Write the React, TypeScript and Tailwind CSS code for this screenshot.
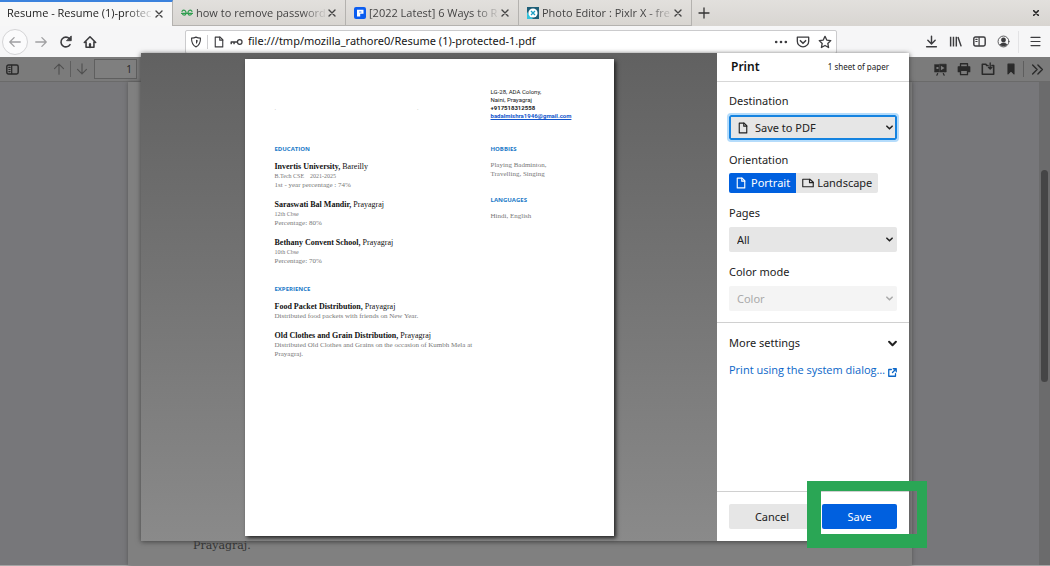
import type { ReactNode } from "react";

type IconProps = { className?: string; children: ReactNode; box?: string };

function Icon({ className = "size-4", children, box = "0 0 16 16" }: IconProps) {
  return (
    <svg
      viewBox={box}
      className={`shrink-0 ${className}`}
      fill="none"
      stroke="currentColor"
      strokeWidth="1.5"
      strokeLinecap="round"
      strokeLinejoin="round"
      aria-hidden="true"
    >
      {children}
    </svg>
  );
}

function PageIcon({ className = "size-3" }: { className?: string }) {
  return (
    <Icon className={className}>
      <path d="M3 1.5h6.5L13 5v9.5H3z" />
      <path d="M9 1.5V5.5h4" />
    </Icon>
  );
}

function Chevron({ className = "size-[7px]" }: { className?: string }) {
  return (
    <Icon className={className} box="0 0 8 8">
      <path d="M1 2.5l3 3 3-3" strokeWidth="1.8" />
    </Icon>
  );
}

function CloseIcon() {
  return (
    <Icon className="size-2" box="0 0 8 8">
      <path d="M1 1l6 6M7 1L1 7" strokeWidth="1.4" />
    </Icon>
  );
}

function Tab({ title, icon, active }: { title: string; icon?: ReactNode; active?: boolean }) {
  return (
    <div
      className={
        active
          ? "flex w-[173px] items-center border-t-2 border-r border-t-[#3b82dd] border-r-[#b4b2af] bg-[#f7f7f7] pr-[9px] pb-px pl-[7px]"
          : "flex w-[173px] items-center border-r border-b border-[#b4b2af] pt-px pr-[9px] pl-2"
      }
    >
      {icon && <span className="mr-[3px] flex size-3 items-center justify-center">{icon}</span>}
      <button
        className={`min-w-0 flex-1 overflow-hidden mask-r-from-80% text-left font-['Open_Sans',sans-serif] whitespace-nowrap ${
          active ? "text-[#222]" : "text-[#444]"
        }`}
      >
        {title}
      </button>
      <button aria-label={`Close ${title}`} className="text-[#444]">
        <CloseIcon />
      </button>
    </div>
  );
}

function TabStrip() {
  return (
    <div className="flex h-[26px] shrink-0 bg-linear-to-b from-[#e2e0dd] to-[#d8d5d1]">
      <Tab active title="Resume - Resume (1)-protec" />
      <Tab
        title="how to remove password"
        icon={
          <Icon className="h-2 w-3 text-[#2f9e4f]" box="0 0 12 8">
            <path
              d="M.5 4.3h11M1 2.3C3-.2 5.3 2 5 4.3 4.7 6.8 1.5 6.5 1.3 4.3M11 2.3C9-.2 6.7 2 7 4.3c.3 2.5 3.5 2.2 3.7 0"
              strokeWidth="1.2"
            />
          </Icon>
        }
      />
      <Tab
        title="[2022 Latest] 6 Ways to R"
        icon={
          <svg viewBox="0 0 12 12" className="size-3">
            <rect width="12" height="12" rx="2" fill="#0b5df0" />
            <path d="M3 2.8h6.5v4H6.2v2.7H3z" fill="#fff" />
            <path d="M5.2 5h2.2" stroke="#0b5df0" strokeWidth="0.8" />
          </svg>
        }
      />
      <Tab
        title="Photo Editor : Pixlr X - fre"
        icon={
          <svg viewBox="0 0 12 12" className="size-3">
            <rect width="12" height="12" fill="#1e5f78" />
            <path d="M0 12V5l6 7z" fill="#33c3dc" />
            <circle cx="6" cy="6" r="4.6" fill="#fff" />
            <path d="M4 4l4 4M8 4L4 8" stroke="#1c9fc4" strokeWidth="1.3" />
          </svg>
        }
      />
      <button aria-label="New tab" className="ml-[6px] text-[#333]">
        <Icon className="size-3" box="0 0 12 12">
          <path d="M6 1v10M1 6h10" strokeWidth="1.3" />
        </Icon>
      </button>
      <button aria-label="Close window" className="mr-[11px] ml-auto text-[#222]">
        <Icon className="size-[6px]" box="0 0 8 8">
          <path d="M1 1l6 6M7 1L1 7" strokeWidth="2.2" />
        </Icon>
      </button>
    </div>
  );
}

function NavBar() {
  return (
    <div className="flex h-[31px] shrink-0 items-center bg-[#f6f6f7] pr-2 pl-[2px] text-[#3c3c3f]">
      <button
        aria-label="Back"
        className="flex size-[26px] items-center justify-center rounded-full border border-[#d4d4d6] bg-white/60 text-[#a0a0a2]"
      >
        <Icon className="size-[14px]">
          <path d="M14 8H2M7 3L2 8l5 5" />
        </Icon>
      </button>
      <button aria-label="Forward" className="ml-[6px] text-[#a0a0a2]">
        <Icon className="size-[14px]">
          <path d="M2 8h12M9 3l5 5-5 5" />
        </Icon>
      </button>
      <button aria-label="Reload" className="ml-[11px]">
        <Icon className="size-[14px]">
          <path d="M12.6 11A5.6 5.6 0 1 1 12 4.2" strokeWidth="1.8" />
          <path d="M14 1.5v5H9z" fill="currentColor" strokeWidth="1" />
        </Icon>
      </button>
      <button aria-label="Home" className="ml-[10px]">
        <Icon className="size-[14px]">
          <path d="M1.5 8.5L8 2l6.5 6.5M3.5 8v6h9V8" strokeWidth="1.8" />
          <path d="M8 14v-3.5" strokeWidth="2.5" />
        </Icon>
      </button>

      <div className="ml-[88px] flex h-6 min-w-0 flex-1 items-center rounded-[2px] border border-[#cbcbcd] bg-white px-1">
        <Icon className="size-3">
          <path d="M8 1.5c2 1 4 1.3 6 1.3 0 6-1.5 10-6 11.7C3.5 12.8 2 8.8 2 2.8c2 0 4-.3 6-1.3z" />
          <path d="M8 5v5.5c1.5-1 2.2-2.5 2.3-5z" fill="currentColor" stroke="none" />
        </Icon>
        <span className="mx-[5px] h-[14px] w-px bg-[#d0d0d2]" />
        <PageIcon className="size-3" />
        <Icon className="ml-[5px] h-[10px] w-[13px]" box="0 0 16 12">
          <circle cx="12" cy="6" r="2.8" />
          <path d="M9 6H1.5v2M5 6v2" strokeWidth="1.8" />
        </Icon>
        <input
          aria-label="Address"
          className="ml-[5px] min-w-0 flex-1 bg-transparent text-[11px] text-[#151515] outline-none"
          defaultValue="file:///tmp/mozilla_rathore0/Resume (1)-protected-1.pdf"
        />
        <button aria-label="Page actions">
          <Icon className="size-[14px]">
            <path d="M2.5 8h.01M8 8h.01M13.5 8h.01" strokeWidth="3" />
          </Icon>
        </button>
        <button aria-label="Save to Pocket" className="ml-2">
          <Icon className="size-[14px]">
            <path d="M1.5 2.5h13V7a6.5 6.5 0 0 1-13 0z" />
            <path d="M5 6.5l3 3 3-3" strokeWidth="1.8" />
          </Icon>
        </button>
        <button aria-label="Bookmark this page" className="ml-2">
          <Icon className="size-[14px]">
            <path d="M8 1.5l2 4.3 4.6.6-3.4 3.2.9 4.7L8 12l-4.1 2.3.9-4.7L1.4 6.4 6 5.8z" />
          </Icon>
        </button>
      </div>

      <div className="ml-[88px] flex items-center gap-[11px]">
        <button aria-label="Downloads">
          <Icon className="size-[13px]">
            <path d="M8 1.5v9M3.5 6.5L8 11l4.5-4.5M2 14.5h12" strokeWidth="1.8" />
          </Icon>
        </button>
        <button aria-label="Library">
          <Icon className="size-[13px]">
            <path d="M2 2v12M5.5 2v12M9 2v12M11 2.5L15 14" strokeLinecap="butt" strokeWidth="1.8" />
          </Icon>
        </button>
        <button aria-label="Sidebars">
          <Icon className="size-[13px]">
            <rect x="1" y="2.5" width="14" height="11" rx="2" strokeWidth="1.8" />
            <path d="M7.5 3v10M3.5 5.5H5M3.5 8H5" />
          </Icon>
        </button>
        <button aria-label="Account">
          <Icon className="size-[13px]">
            <circle cx="8" cy="8" r="6.7" strokeWidth="1" />
            <circle cx="8" cy="6" r="2.2" fill="currentColor" />
            <path d="M4 12c.5-3 7.5-3 8 0-2 2-6 2-8 0z" fill="currentColor" strokeWidth="1" />
          </Icon>
        </button>
      </div>
      <span className="ml-2 h-[22px] w-px bg-[#e3e3e5]" />
      <button aria-label="Menu" className="ml-[10px]">
        <Icon className="size-[13px]">
          <path d="M2.5 3h11M2.5 8h11M2.5 13h11" />
        </Icon>
      </button>
    </div>
  );
}

function ViewerToolbar() {
  return (
    <div className="flex h-[25px] shrink-0 items-center border-b border-[#6a6a6a] bg-[#7b7b7b] px-[6px] text-[#2a2a2a]">
      <button aria-label="Toggle sidebar">
        <Icon className="size-[13px]">
          <rect x="1" y="2.5" width="14" height="11" rx="2" strokeWidth="1.8" />
          <path d="M7 3v10M3.5 5.5H5M3.5 8H5M3.5 10.5H5" />
        </Icon>
      </button>
      <button aria-label="Previous page" className="ml-[34px] text-[#505050]">
        <Icon className="size-3">
          <path d="M8 15V1.5M2 7.5l6-6 6 6" />
        </Icon>
      </button>
      <span className="mx-[5px] h-4 w-px bg-[#5e5e5e]" />
      <button aria-label="Next page" className="text-[#505050]">
        <Icon className="size-3">
          <path d="M8 1v13.5M2 8.5l6 6 6-6" />
        </Icon>
      </button>
      <input
        aria-label="Page number"
        defaultValue="1"
        className="ml-[6px] h-5 w-[43px] border border-[#5f5f5f] bg-[#7f7f7f] pr-1 text-right text-[10px]"
      />
      <div className="ml-auto flex items-center gap-[10px]">
        <button aria-label="Presentation mode">
          <Icon className="size-[13px]">
            <path d="M1 2h5v9H1zM7 1.5h8V11H7z" fill="currentColor" strokeWidth="0.8" />
            <path d="M8.5 3.5V9L13 6.2zM3 5h2.5v2.5H3z" fill="#7b7b7b" stroke="none" />
            <path d="M4.5 13l-1 2M11.5 13l1 2" />
          </Icon>
        </button>
        <button aria-label="Print">
          <Icon className="size-[14px]">
            <path d="M4 5V2h8v3" />
            <path d="M1.5 5.5h13V11h-13z" fill="currentColor" />
            <path d="M4 9.5h8v5H4z" fill="#7b7b7b" />
          </Icon>
        </button>
        <button aria-label="Open file">
          <Icon className="size-[14px]">
            <path d="M8 4H6.5l-1-1.5h-4V14h13V4h-2" strokeWidth="1.8" />
            <path d="M10.5 1v6.5M8.5 6l2 2 2-2" />
          </Icon>
        </button>
        <button aria-label="Current view">
          <Icon className="size-3">
            <path d="M4 1.5h8v13l-4-4-4 4z" fill="currentColor" />
          </Icon>
        </button>
      </div>
      <span className="ml-[6px] h-4 w-px bg-[#5e5e5e]" />
      <button aria-label="Tools" className="ml-[7px]">
        <Icon className="size-[13px]">
          <path d="M2 2.5L7.5 8 2 13.5M8.5 2.5L14 8l-5.5 5.5" strokeWidth="1.7" />
        </Icon>
      </button>
    </div>
  );
}

type Entry = { name: string; place: string; lines: string[] };

const education: Entry[] = [
  { name: "Invertis University,", place: "Bareilly", lines: ["B.Tech CSE    2021-2025", "1st - year percentage : 74%"] },
  { name: "Saraswati Bal Mandir,", place: "Prayagraj", lines: ["12th Cbse", "Percentage: 80%"] },
  { name: "Bethany Convent School,", place: "Prayagraj", lines: ["10th Cbse", "Percentage: 70%"] },
];

const experience: Entry[] = [
  { name: "Food Packet Distribution,", place: "Prayagraj", lines: ["Distributed food packets with friends on New Year."] },
  {
    name: "Old Clothes and Grain Distribution,",
    place: "Prayagraj",
    lines: ["Distributed Old Clothes and Grains on the occasion of Kumbh Mela at Prayagraj."],
  },
];

function Heading({ children }: { children: ReactNode }) {
  return (
    <h3 className="mb-2 font-['Open_Sans',sans-serif] text-[6px] leading-2 font-bold text-[#2079c7]">
      {children}
    </h3>
  );
}

function Entries({ items }: { items: Entry[] }) {
  return (
    <div className="flex flex-col gap-[9px]">
      {items.map((item) => (
        <div key={item.name}>
          <p className="text-[8px] leading-[11px] text-[#111]">
            <b>{item.name}</b> {item.place}
          </p>
          {item.lines.map((line, i) => (
            <p key={line} className={`whitespace-pre-wrap ${i === 0 && item.lines.length > 1 ? "text-[6px]" : ""}`}>
              {line}
            </p>
          ))}
        </div>
      ))}
    </div>
  );
}

function Sheet() {
  return (
    <div className="aspect-[369/477] h-full bg-white pt-[29px] pl-[30px] font-['Liberation_Serif',serif] text-[7px] leading-[9px] text-[#777] shadow-[2px_2px_4px_#222]">
      <div className="flex h-8 font-[Roboto,sans-serif] text-[6px] leading-2 text-[#222]">
        <div className="flex w-[216px] items-end justify-between pr-[72px] pb-2 text-[#999]">
          <span>.</span>
          <span>.</span>
        </div>
        <address className="not-italic">
          LG-28, ADA Colony,
          <br />
          Naini, Prayagraj
          <br />
          <b>+917518312558</b>
          <br />
          <a href="mailto:badalmishra1946@gmail.com" className="font-bold text-[#1155cc] underline">
            badalmishra1946@gmail.com
          </a>
        </address>
      </div>
      <div className="mt-[25px] flex">
        <div className="w-[216px] pr-2">
          <Heading>EDUCATION</Heading>
          <Entries items={education} />
          <div className="mt-[19px]">
            <Heading>EXPERIENCE</Heading>
            <Entries items={experience} />
          </div>
        </div>
        <div>
          <Heading>HOBBIES</Heading>
          <p>
            Playing Badminton,
            <br />
            Travelling, Singing
          </p>
          <div className="mt-[17px]">
            <Heading>LANGUAGES</Heading>
            <p>Hindi, English</p>
          </div>
        </div>
      </div>
    </div>
  );
}

type SelectProps = { id: string; label: string; value: string; icon?: ReactNode; focused?: boolean; disabled?: boolean };

function SelectField({ id, label, value, icon, focused, disabled }: SelectProps) {
  return (
    <div className="flex flex-col gap-1">
      <label htmlFor={id}>{label}</label>
      <div className={`relative ${disabled ? "text-[#aaa]" : "text-[#222]"}`}>
        <select
          id={id}
          disabled={disabled}
          className={`h-[25px] w-full appearance-none rounded-[2px] pr-5 ${icon ? "pl-6" : "pl-2"} ${
            disabled ? "bg-[#f4f4f4]" : "bg-[#e6e6e6]"
          } ${focused ? "border-2 border-[#1583e0] outline-2 outline-[#b5dcfb]" : "outline-none"}`}
        >
          <option>{value}</option>
        </select>
        {icon && <span className="pointer-events-none absolute inset-y-0 left-2 flex items-center">{icon}</span>}
        <span className="pointer-events-none absolute inset-y-0 right-1 flex items-center">
          <Chevron />
        </span>
      </div>
    </div>
  );
}

function PrintSettings() {
  return (
    <form className="flex w-48 shrink-0 flex-col bg-white leading-5 text-[#222]" onSubmit={(e) => e.preventDefault()}>
      <header className="flex h-[29px] items-center justify-between border-b border-[#d7d7d7] pr-5 pl-[14px]">
        <h2 className="text-xs font-semibold text-[#111]">Print</h2>
        <span className="text-[8px]">1 sheet of paper</span>
      </header>

      <div className="flex flex-col gap-[10px] border-b border-[#d0d0d0] px-3 pt-[9px] pb-[11px]">
        <SelectField id="destination" label="Destination" value="Save to PDF" icon={<PageIcon />} focused />
        <fieldset>
          <legend className="mb-[3px]">Orientation</legend>
          <div className="flex">
            <label className="flex h-5 items-center gap-1 rounded-l-[2px] bg-[#0060df] px-[6px] text-white">
              <input type="radio" name="orientation" defaultChecked className="sr-only" />
              <PageIcon />
              Portrait
            </label>
            <label className="flex h-5 items-center gap-[3px] rounded-r-[2px] bg-[#e6e6e6] px-[6px]">
              <input type="radio" name="orientation" className="sr-only" />
              <Icon className="size-3">
                <path d="M1 3h9.5L15 7v6H1z" />
                <path d="M10 3v4.5h5" />
              </Icon>
              Landscape
            </label>
          </div>
        </fieldset>
        <SelectField id="pages" label="Pages" value="All" />
        <SelectField id="color-mode" label="Color mode" value="Color" disabled />
      </div>

      <div className="flex flex-1 flex-col gap-[7px] px-3 pt-[10px]">
        <button type="button" className="flex items-center justify-between">
          More settings
          <Chevron className="size-[9px]" />
        </button>
        <a
          href="#system-dialog"
          className="flex items-center justify-between font-['Open_Sans',sans-serif] whitespace-nowrap text-[#0a66c8]"
        >
          Print using the system dialog…
          <Icon className="mt-1 size-[9px]" box="0 0 12 12">
            <path d="M4.5 2H1v9h9V7.5M7 1h4v4M11 1L6 6" strokeWidth="1.7" />
          </Icon>
        </a>
      </div>

      <footer className="flex gap-[7px] border-t border-[#d0d0d0] p-3">
        <button type="button" className="h-[25px] w-[86px] rounded-[2px] bg-[#e6e6e6]">
          Cancel
        </button>
        <button type="submit" className="h-[25px] flex-1 rounded-[2px] bg-[#0060df] text-white">
          Save
        </button>
      </footer>
    </form>
  );
}

export default function App() {
  return (
    <div className="relative flex h-screen flex-col overflow-hidden bg-[#77777a] font-['Noto_Sans',sans-serif] text-[11px]">
      <TabStrip />
      <NavBar />
      <ViewerToolbar />

      {/* dimmed document behind the dialog */}
      <main className="flex min-h-0 flex-1 border-b border-[#a5a5a5]">
        <div className="mr-[127px] ml-32 flex flex-1 items-end bg-[#808080] px-[65px] pb-[9px] shadow-[0_0_4px_#555]">
          <p className="font-['DejaVu_Serif',serif] text-[11px] leading-5 text-[#333]">Prayagraj.</p>
        </div>
        <div className="w-[11px] bg-[#6b6b6c] px-[2px] pt-[88px]">
          <div className="h-[212px] rounded-full bg-[#454546]" />
        </div>
      </main>

      {/* print dialog */}
      <div
        role="dialog"
        aria-label="Print"
        className="absolute top-[53px] right-[141px] bottom-[25px] left-[141px] flex shadow-[0_1px_5px_#444]"
      >
        <div className="flex min-w-0 flex-1 justify-center bg-linear-to-b from-[#616161] to-[#8a8a8a] pt-[6px] pb-[5px]">
          <Sheet />
        </div>
        <PrintSettings />
      </div>

      {/* highlight around the save button */}
      <div className="pointer-events-none absolute right-[123px] bottom-[18px] h-[67px] w-[120px] border-t-10 border-r-10 border-b-14 border-l-14 border-[#2aa655]" />
    </div>
  );
}
